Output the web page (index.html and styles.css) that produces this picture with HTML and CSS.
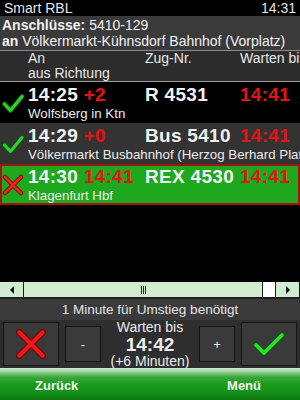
FILE: index.html
```html
<!DOCTYPE html>
<html lang="de">
<head>
<meta charset="utf-8">
<title>Smart RBL</title>
<link rel="stylesheet" href="styles.css">
</head>
<body>
<div class="screen">
  <div class="titlebar"><span>Smart RBL</span><span>14:31</span></div>
  <div class="info">
    <div class="line"><b>Anschlüsse:</b> 5410-129</div>
    <div class="line"><b>an</b> Völkermarkt-Kühnsdorf Bahnhof (Vorplatz)</div>
  </div>
  <div class="colhead">
    <span class="c-time">An</span>
    <span class="c-train">Zug-Nr.</span>
    <span class="c-wait">Warten bis</span>
    <span class="c-sub">aus Richtung</span>
  </div>
  <div class="list">
    <div class="row row-black">
      <svg class="icon" viewBox="0 0 22 22" width="22" height="22"><path d="M2.5 12 L8.5 18.5 L20 4.5" fill="none" stroke="#0b5a0b" stroke-width="5" stroke-linecap="round" stroke-linejoin="round"/><path d="M2.5 12 L8.5 18.5 L20 4.5" fill="none" stroke="#2fd02f" stroke-width="3" stroke-linecap="round" stroke-linejoin="round"/></svg>
      <span class="c-time big">14:25 <span class="red">+2</span></span>
      <span class="c-train big">R 4531</span>
      <span class="c-wait big red">14:41</span>
      <span class="c-sub">Wolfsberg in Ktn</span>
    </div>
    <div class="row row-gray">
      <svg class="icon" viewBox="0 0 22 22" width="22" height="22"><path d="M2.5 12 L8.5 18.5 L20 4.5" fill="none" stroke="#0b5a0b" stroke-width="5" stroke-linecap="round" stroke-linejoin="round"/><path d="M2.5 12 L8.5 18.5 L20 4.5" fill="none" stroke="#2fd02f" stroke-width="3" stroke-linecap="round" stroke-linejoin="round"/></svg>
      <span class="c-time big">14:29 <span class="red">+0</span></span>
      <span class="c-train big">Bus 5410</span>
      <span class="c-wait big red">14:41</span>
      <span class="c-sub">Völkermarkt Busbahnhof (Herzog Berhard Platz)</span>
    </div>
    <div class="row row-sel">
      <svg class="icon" viewBox="0 0 22 22" width="22" height="22"><path d="M3 3 L19 19 M19 3 L3 19" fill="none" stroke="#7a0808" stroke-width="4.5" stroke-linecap="round"/><path d="M3 3 L19 19 M19 3 L3 19" fill="none" stroke="#f02020" stroke-width="2.6" stroke-linecap="round"/></svg>
      <span class="c-time big">14:30 <span class="red">14:41</span></span>
      <span class="c-train big">REX 4530</span>
      <span class="c-wait big red">14:41</span>
      <span class="c-sub">Klagenfurt Hbf</span>
    </div>
  </div>
  <div class="empty"></div>
  <div class="scrollbar">
    <div class="sb-btn"><span class="tri-left"></span></div>
    <div class="sb-thumb"><span class="grip"></span></div>
    <div class="sb-track"></div>
    <div class="sb-btn"><span class="tri-right"></span></div>
  </div>
  <div class="status">1 Minute für Umstieg benötigt</div>
  <div class="controls">
    <div class="btn btn-big">
      <svg viewBox="0 0 30 30" width="32" height="32"><path d="M4 4 L26 26 M26 4 L4 26" fill="none" stroke="#6e0606" stroke-width="6" stroke-linecap="round"/><path d="M4 4 L26 26 M26 4 L4 26" fill="none" stroke="#ee1a1a" stroke-width="3.8" stroke-linecap="round"/></svg>
    </div>
    <div class="btn btn-small">-</div>
    <div class="wait">
      <div class="w-label">Warten bis</div>
      <div class="w-time">14:42</div>
      <div class="w-extra">(+6 Minuten)</div>
    </div>
    <div class="btn btn-small">+</div>
    <div class="btn btn-big">
      <svg viewBox="0 0 32 26" width="32" height="26"><path d="M3 14 L11 22 L29 4" fill="none" stroke="#0a5a0a" stroke-width="6" stroke-linecap="round" stroke-linejoin="round"/><path d="M3 14 L11 22 L29 4" fill="none" stroke="#2ee02e" stroke-width="3.6" stroke-linecap="round" stroke-linejoin="round"/></svg>
    </div>
  </div>
  <div class="softkeys"><span>Zurück</span><span>Menü</span></div>
</div>
</body>
</html>
```

FILE: styles.css
```css
html, body {
  margin: 0;
  padding: 0;
  background: #000;
}
.screen {
  width: 300px;
  height: 400px;
  display: flex;
  flex-direction: column;
  overflow: hidden;
  font-family: "Liberation Sans", Arial, sans-serif;
  font-size: 14px;
  color: #f2f2f2;
  background: #000;
}
.titlebar {
  height: 16px;
  flex: none;
  display: flex;
  justify-content: space-between;
  align-items: center;
  padding: 0 4px 0 4px;
  background: #000;
  color: #e6e6e6;
  font-size: 14px;
  line-height: 16px;
}
.info {
  height: 34px;
  flex: none;
  background: #3a3a3a;
  padding: 0 2px;
  display: flex;
  flex-direction: column;
  justify-content: center;
  border-bottom: 1px solid #8c8c8c;
}
.info .line {
  line-height: 16px;
  white-space: nowrap;
}
.colhead {
  height: 30px;
  flex: none;
  background: #2c2c2c;
  display: grid;
  grid-template-columns: 28px 117px 95px 60px;
  grid-template-rows: 15px 15px;
  line-height: 15px;
  color: #e8e8e8;
  border-bottom: 1px solid #9a9a9a;
  white-space: nowrap;
  overflow: hidden;
}
.colhead .c-time { grid-column: 2; grid-row: 1; }
.colhead .c-train { grid-column: 3; grid-row: 1; }
.colhead .c-wait { grid-column: 4; grid-row: 1; overflow: hidden; }
.colhead .c-sub { grid-column: 2 / 5; grid-row: 2; }
.list {
  flex: none;
  display: flex;
  flex-direction: column;
}
.row {
  height: 41px;
  box-sizing: border-box;
  display: grid;
  grid-template-columns: 28px 117px 95px 60px;
  grid-template-rows: 23px 16px;
  padding-top: 1px;
  white-space: nowrap;
  overflow: hidden;
}
.row-black { background: #000; }
.row-gray { background: #333; }
.row-sel {
  background: #1ea81e;
  box-shadow: inset 0 0 0 2px #a51212;
}
.row .icon {
  grid-column: 1;
  grid-row: 1 / 3;
  align-self: center;
  margin-left: 2px;
}
.row .c-time { grid-column: 2; grid-row: 1; }
.row .c-train { grid-column: 3; grid-row: 1; }
.row .c-wait { grid-column: 4; grid-row: 1; }
.row .c-sub {
  grid-column: 2 / 5;
  grid-row: 2;
  overflow: hidden;
  line-height: 15px;
  font-size: 13.3px;
  color: #ececec;
}
.big {
  font-weight: bold;
  font-size: 19px;
  line-height: 23px;
  letter-spacing: 0.3px;
}
.red { color: #e41414; }
.empty {
  flex: 1;
  background: #000;
}
.scrollbar {
  height: 16px;
  flex: none;
  display: flex;
  gap: 1px;
  background: #1c1c1c;
  padding: 0 1px 1px 0;
  box-sizing: border-box;
}
.sb-btn {
  width: 23px;
  background: #d2ecd2;
  display: flex;
  align-items: center;
  justify-content: center;
}
.sb-thumb {
  flex: 1;
  background: #d2ecd2;
  display: flex;
  align-items: center;
  justify-content: center;
}
.grip {
  width: 5px;
  height: 8px;
  border-left: 1px solid #222;
  border-right: 1px solid #222;
  box-sizing: border-box;
  background: linear-gradient(90deg, transparent 1px, #222 1px, #222 2px, transparent 2px);
}
.sb-track {
  width: 12px;
  background: #fff;
}
.tri-left {
  width: 0;
  height: 0;
  border-top: 4px solid transparent;
  border-bottom: 4px solid transparent;
  border-right: 4px solid #111;
}
.tri-right {
  width: 0;
  height: 0;
  border-top: 4px solid transparent;
  border-bottom: 4px solid transparent;
  border-left: 4px solid #111;
}
.status {
  height: 22px;
  flex: none;
  background: #3a3a3a;
  text-align: center;
  line-height: 22px;
  font-size: 13.5px;
  color: #e4e4e4;
  border-top: 1px solid #222;
  box-sizing: border-box;
}
.controls {
  height: 48px;
  flex: none;
  background: #2e2e2e;
  display: flex;
  align-items: center;
  padding: 0 3px;
  box-sizing: border-box;
}
.btn {
  box-sizing: border-box;
  border: 1px solid #141414;
  background: #3a3a3a;
  display: flex;
  align-items: center;
  justify-content: center;
  color: #e8e8e8;
}
.btn-big {
  width: 56px;
  height: 44px;
}
.btn-small {
  width: 36px;
  height: 36px;
  margin: 0 6px;
  font-size: 13px;
}
.wait {
  flex: 1;
  text-align: center;
  display: flex;
  flex-direction: column;
  align-items: center;
  color: #ececec;
}
.w-label { line-height: 15px; }
.w-time {
  font-weight: bold;
  font-size: 19px;
  line-height: 19px;
}
.w-extra { line-height: 14px; }
.softkeys {
  height: 32px;
  flex: none;
  display: flex;
  justify-content: space-between;
  align-items: center;
  padding: 2px 39px 0 35px;
  box-sizing: border-box;
  font-weight: bold;
  font-size: 13px;
  color: #f4f4f4;
  background: linear-gradient(#d4e9d4 0, #a8d6a8 3px, #3aa83a 9px, #1b9c1b 16px, #14921a 24px, #0e7410 32px);
}
```
